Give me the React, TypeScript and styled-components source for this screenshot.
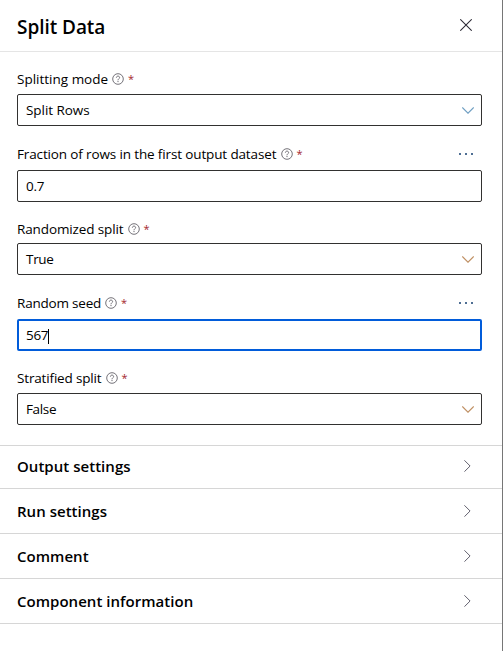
import React from 'react';
import styled, { createGlobalStyle } from 'styled-components';

const GlobalStyle = createGlobalStyle`
  * { box-sizing: border-box; }
  body {
    margin: 0;
    background: #fff;
    color: #000;
    font-family: "Open Sans", "Noto Sans", sans-serif;
  }
`;

const Panel = styled.aside`
  width: 503px;
  height: 651px;
  border-right: 1px solid #767676;
  background: #fff;
  display: flex;
  flex-direction: column;
  overflow: hidden;
`;

const Header = styled.header`
  display: flex;
  align-items: center;
  justify-content: space-between;
  height: 52px;
  padding: 2px 30px 0 17px;
  border-bottom: 1px solid #e5e5e5;
`;

const Title = styled.h1`
  margin: 0;
  font-size: 19px;
  line-height: 26px;
  font-weight: 600;
  letter-spacing: -0.05px;
  white-space: nowrap;
`;

const IconButton = styled.button`
  display: flex;
  margin: 0;
  padding: 0;
  border: 0;
  background: none;
`;

const CloseButton = styled(IconButton)`
  margin-bottom: 4px;
`;

const Form = styled.div`
  padding: 15px 20px 20px 17px;
`;

const FieldBlock = styled.div<{ $after: number }>`
  margin-bottom: ${p => p.$after}px;
`;

const LabelRow = styled.div<{ $below: number }>`
  display: flex;
  align-items: center;
  height: 24px;
  margin-bottom: ${p => p.$below}px;
`;

const Label = styled.label<{ $tracking: number; $width: number }>`
  width: ${p => p.$width}px;
  margin-right: 4px;
  font-size: 13.5px;
  line-height: 24px;
  letter-spacing: ${p => p.$tracking}px;
  white-space: nowrap;
`;

const Required = styled.span`
  margin-left: 4px;
  font-size: 11px;
  line-height: 22px;
  color: #a4262c;
`;

const MoreButton = styled(IconButton)`
  margin-left: auto;
  margin-right: 9px;
`;

const Control = styled.div<{ $focused?: boolean }>`
  display: flex;
  align-items: center;
  justify-content: space-between;
  height: 32px;
  padding: 0 ${p => (p.$focused ? 6 : 7)}px 0 ${p => (p.$focused ? 7 : 8)}px;
  border: ${p => (p.$focused ? '2px solid #015cda' : '1px solid #323130')};
  border-radius: 2px;
`;

const Value = styled.span<{ $tracking: number }>`
  display: flex;
  align-items: center;
  font-size: 13.5px;
  line-height: 24px;
  letter-spacing: ${p => p.$tracking}px;
  white-space: nowrap;
`;

const Caret = styled.span`
  width: 1px;
  height: 15px;
  margin-top: 2px;
  background: #000;
`;

const Sections = styled.div`
  border-top: 1px solid #d6d6d6;
`;

const SectionRow = styled.div<{ $height: number }>`
  display: flex;
  align-items: center;
  justify-content: space-between;
  height: ${p => p.$height}px;
  padding: 0 31px ${p => 45 - p.$height}px 17px;
  border-bottom: 1px solid #d6d6d6;
`;

const SectionTitle = styled.h2`
  margin: 0;
  font-size: 15px;
  line-height: 24px;
  font-weight: 600;
  letter-spacing: 0.03px;
  white-space: nowrap;
`;

const CloseIcon = () => (
  <svg width="12" height="12" viewBox="0 0 12 12" fill="none" stroke="#2c2a35" strokeWidth="1.05">
    <path d="M.3.3 11.7 11.7M11.7.3.3 11.7" />
  </svg>
);

const HelpIcon = () => (
  <svg width="12" height="12" viewBox="0 0 12 12" fill="none" stroke="#5c5a62" strokeWidth=".85">
    <circle cx="6" cy="6" r="5.3" />
    <path d="M4.4 4.7C4.4 3.7 5.1 3.1 6 3.1S7.6 3.7 7.6 4.6C7.6 5.8 6 5.8 6 7.3" />
    <path d="M6 8.1V9.1" strokeWidth="1" />
  </svg>
);

const DownIcon = ({ color }: { color: string }) => (
  <svg width="12" height="7" viewBox="0 0 12 7" fill="none" stroke={color} strokeWidth="1.1">
    <path d="M.3.4 6 6.1 11.7.4" />
  </svg>
);

const RightIcon = () => (
  <svg width="7" height="12" viewBox="0 0 7 12" fill="none" stroke="#62606e" strokeWidth="1">
    <path d="M.4.3 6.1 6 .4 11.7" />
  </svg>
);

const MoreIcon = () => (
  <svg width="14" height="2" viewBox="0 0 14 2" fill="#4f6f94">
    <path d="M0 0h2v2H0zM6 0h2v2H6zM12 0h2v2h-2z" />
  </svg>
);

type Field = {
  label: string;
  width: number;
  tracking: number;
  value: string;
  valueTracking: number;
  chevron?: string;
  more?: boolean;
  focused?: boolean;
  below: number;
  after: number;
};

const fields: Field[] = [
  { label: 'Splitting mode', width: 91, tracking: 0, value: 'Split Rows', valueTracking: -0.05, chevron: '#6f9fc2', below: 3, after: 16 },
  { label: 'Fraction of rows in the first output dataset', width: 259.5, tracking: -0.137, value: '0.7', valueTracking: -0.2, more: true, below: 4, after: 15 },
  { label: 'Randomized split', width: 106.5, tracking: -0.12, value: 'True', valueTracking: -0.3, chevron: '#bf8f62', below: 2, after: 16 },
  { label: 'Random seed', width: 84, tracking: -0.2, value: '567', valueTracking: -0.3, more: true, focused: true, below: 4, after: 15 },
  { label: 'Stratified split', width: 84.5, tracking: -0.16, value: 'False', valueTracking: -0.35, chevron: '#bf8f62', below: 3, after: 0 },
];

const sections = [
  { title: 'Output settings', height: 43 },
  { title: 'Run settings', height: 45 },
  { title: 'Comment', height: 45 },
  { title: 'Component information', height: 45 },
];

export default function App() {
  return (
    <>
      <GlobalStyle />
      <Panel>
        <Header>
          <Title>Split Data</Title>
          <CloseButton aria-label="Close"><CloseIcon /></CloseButton>
        </Header>
        <Form>
          {fields.map(f => (
            <FieldBlock key={f.label} $after={f.after}>
              <LabelRow $below={f.below}>
                <Label $tracking={f.tracking} $width={f.width}>{f.label}</Label>
                <HelpIcon />
                <Required>*</Required>
                {f.more && <MoreButton aria-label="More options"><MoreIcon /></MoreButton>}
              </LabelRow>
              <Control $focused={f.focused}>
                <Value $tracking={f.valueTracking}>
                  {f.value}
                  {f.focused && <Caret />}
                </Value>
                {f.chevron && <DownIcon color={f.chevron} />}
              </Control>
            </FieldBlock>
          ))}
        </Form>
        <Sections>
          {sections.map(s => (
            <SectionRow key={s.title} $height={s.height}>
              <SectionTitle>{s.title}</SectionTitle>
              <RightIcon />
            </SectionRow>
          ))}
        </Sections>
      </Panel>
    </>
  );
}
